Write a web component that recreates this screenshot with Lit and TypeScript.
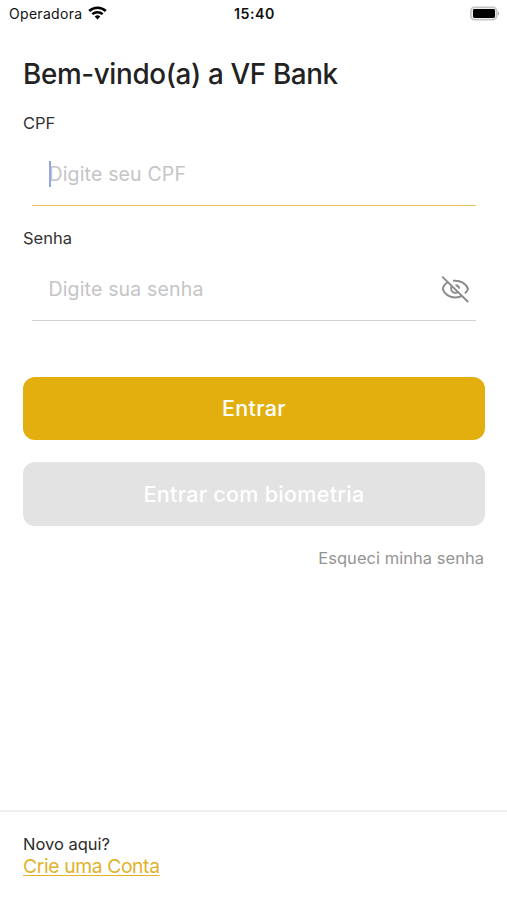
import { LitElement, html, css } from "lit";
import { customElement, property } from "lit/decorators.js";
import { classMap } from "lit/directives/class-map.js";

@customElement("status-bar")
class StatusBar extends LitElement {
  static styles = css`
    :host { display: grid; grid-template-columns: 1fr auto 1fr; align-items: center; height: 27px; padding: 0 7px 0 9px; color: #111; }
    .carrier { display: flex; align-items: center; gap: 6px; font-size: 14px; letter-spacing: 0.3px; }
    .wifi { display: block; width: 19px; height: 15px; margin-top: -2px; }
    .time { font-size: 14.2px; font-weight: 600; letter-spacing: 0.55px; }
    .battery { display: block; justify-self: end; width: 31px; height: 15px; margin-top: -1px; }
  `;
  render() {
    return html`
      <div class="carrier"><span>Operadora</span>
        <svg class="wifi" viewBox="0 0 19 15">
          <g fill="none" stroke="#000" stroke-width="2.5">
            <path d="M1.2 6 A12 12 0 0 1 17.8 6"></path>
            <path d="M4.3 9.2 A7.6 7.6 0 0 1 14.7 9.2"></path>
          </g>
          <path d="M6.7 11.5 A4.1 4.1 0 0 1 12.3 11.5 L9.5 14.4 Z" fill="#000"></path>
        </svg>
      </div>
      <span class="time">15:40</span>
      <svg class="battery" viewBox="0 0 31 15">
        <rect x="1.8" y="1.2" width="25.8" height="12.6" rx="3.8" fill="#eee" stroke="#c4c4c4" stroke-width="1.6"></rect>
        <rect x="4" y="3" width="22" height="9" rx="1.4" fill="#000"></rect>
        <path d="M28.8 5.3 Q31.6 7.5 28.8 9.7 Z" fill="#aaa"></path>
      </svg>`;
  }
}

@customElement("form-field")
class FormField extends LitElement {
  @property() label = "";
  @property() hint = "";
  @property({ type: Boolean }) active = false;
  @property({ type: Boolean }) secret = false;

  static styles = css`
    :host { display: block; height: 115px; }
    .label { display: block; height: 20px; line-height: 20px; font-size: 16.5px; color: #333; }
    .box { position: relative; display: flex; align-items: center; justify-content: space-between; box-sizing: border-box; height: 63px; margin: 10px 9px 0; padding: 0 7px 0 16.5px; border-bottom: 1px solid #d2d2d2; }
    .box.active { border-bottom-color: #ecc65a; }
    .hint { font-size: 19.5px; letter-spacing: 0.16px; color: #c5c5c7; }
    .caret { position: absolute; left: 16.5px; top: 18px; width: 2px; height: 26px; background: #93a7e6; }
    .eye { display: block; width: 28px; height: 28px; }
  `;
  render() {
    return html`
      <span class="label">${this.label}</span>
      <div class=${classMap({ box: true, active: this.active })}>
        <span class="hint">${this.hint}</span>
        ${this.active ? html`<i class="caret"></i>` : ""}
        ${this.secret
          ? html`<svg class="eye" viewBox="0 0 28 28" fill="none" stroke="#8c8c8c" stroke-width="2">
              <path d="M1.2 1.6 L27.2 27"></path>
              <path d="M6.8 7.2 C4 9 2.1 11.6 1.8 14 C3.2 19 8.4 22.5 14.5 22.5 C17 22.5 19.3 21.9 21.2 20.9"></path>
              <path d="M12 5.8 C19.5 4.8 25.4 9 27 14 C26.4 15.7 25.3 17.1 23.9 18.2"></path>
              <path d="M10.6 11.2 C9 14 10.8 17.9 14.2 17.9 C15.6 17.9 16.7 17.4 17.4 16.6"></path>
              <path d="M14.5 10.3 C16.5 10.4 18 11.8 18.2 13.7"></path>
            </svg>`
          : ""}
      </div>`;
  }
}

@customElement("app-root")
class AppRoot extends LitElement {
  static styles = css`
    :host { display: flex; flex-direction: column; height: 900px; overflow: hidden; background: #fff; font-family: Inter, "Liberation Sans", sans-serif; white-space: nowrap; }
    main { display: flex; flex-direction: column; flex: 1; padding: 29px 22px 0 23px; }
    h1 { margin: 0 0 21px; height: 36px; line-height: 36px; font-size: 27.8px; font-weight: 500; letter-spacing: -0.35px; color: #222; }
    .actions { display: flex; flex-direction: column; gap: 22px; margin-top: 34px; }
    button { height: 63px; padding: 0 0 1px; border: 0; border-radius: 12px; font: 500 21.5px Inter, sans-serif; letter-spacing: 0.3px; color: #fff; background: #e2af0e; }
    button:disabled { height: 63.5px; padding: 1px 0 0; background: #e3e3e3; }
    .forgot { align-self: flex-end; margin: 22.5px 1px 0 0; line-height: 20px; font-size: 16.5px; letter-spacing: 0.03px; color: #949494; }
    footer { display: flex; flex-direction: column; align-items: flex-start; box-sizing: border-box; height: 90px; padding: 22px 23px 0; border-top: 2px solid #efefef; }
    .new { line-height: 20px; font-size: 16.5px; color: #2b2b2b; }
    .create { line-height: 24px; font-size: 19.3px; letter-spacing: -0.37px; color: #e0b22c; text-decoration: underline; text-decoration-thickness: 1px; text-underline-offset: 2px; text-decoration-skip-ink: none; }
  `;
  render() {
    return html`
      <status-bar></status-bar>
      <main>
        <h1>Bem-vindo(a) a VF Bank</h1>
        <form-field label="CPF" hint="Digite seu CPF" active></form-field>
        <form-field label="Senha" hint="Digite sua senha" secret></form-field>
        <div class="actions">
          <button>Entrar</button>
          <button disabled>Entrar com biometria</button>
        </div>
        <span class="forgot">Esqueci minha senha</span>
      </main>
      <footer>
        <span class="new">Novo aqui?</span>
        <a class="create">Crie uma Conta</a>
      </footer>`;
  }
}
